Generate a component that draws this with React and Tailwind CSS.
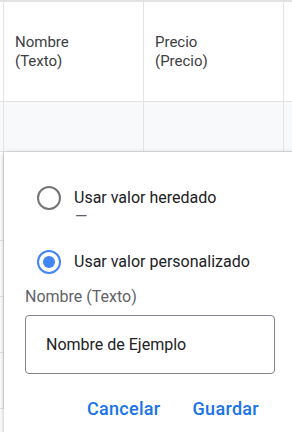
import React from 'react';

function Radio({ checked }) {
    return checked ? (
        <div className="w-6 h-6 rounded-full border-[2.5px] border-[#4285f4] flex items-center justify-center shrink-0">
            <div className="w-3 h-3 rounded-full bg-[#4285f4]"></div>
        </div>
    ) : (
        <div className="w-6 h-6 rounded-full border-[2.5px] border-[#757575] shrink-0"></div>
    );
}

function BodyRow({ height, shaded }) {
    return (
        <div className={`flex border-b border-[#e3e3e3] ${height} ${shaded ? 'bg-[#f8f9fa]' : 'bg-white'}`}>
            <div className="w-[4px] border-r border-[#e3e3e3]"></div>
            <div className="w-[140px] border-r border-[#e3e3e3]"></div>
            <div className="w-[140px] border-r border-[#e3e3e3]"></div>
            <div className="flex-1"></div>
        </div>
    );
}

export default function App() {
    return (
        <div className="relative w-[292px] h-[432px] overflow-hidden bg-white font-['Roboto',sans-serif]">
            {/* table behind */}
            <div className="border-t-2 border-[#e3e3e3]">
                <div className="flex h-[100px] border-b border-[#e3e3e3]">
                    <div className="w-[4px] border-r border-[#e3e3e3]"></div>
                    <div className="w-[140px] border-r border-[#e3e3e3] pl-[11px] flex items-center text-[15px] leading-[19px] text-[#3c4043]">
                        <div>Nombre<br />(Texto)</div>
                    </div>
                    <div className="w-[140px] border-r border-[#e3e3e3] pl-[11px] flex items-center text-[15px] leading-[19px] text-[#3c4043]">
                        <div>Precio<br />(Precio)</div>
                    </div>
                    <div className="flex-1"></div>
                </div>
                <BodyRow height="h-[50px]" shaded />
                <BodyRow height="h-[89px]" />
                <BodyRow height="h-[56px]" />
                <BodyRow height="h-[56px]" />
                <BodyRow height="h-[56px]" />
            </div>

            {/* edit popup */}
            <div className="absolute left-[4px] top-[152px] w-[300px] h-[300px] bg-white shadow-[0_1px_4px_rgba(0,0,0,0.2),0_2px_8px_rgba(0,0,0,0.1)] pl-[21px] pr-[29px] pt-[34px]">
                <div className="flex items-start gap-[13px] pl-[12px]">
                    <Radio />
                    <div>
                        <div className="text-[16px] leading-[24px] text-[#202124]">Usar valor heredado</div>
                        <div className="text-[16px] leading-[14px] text-[#5f6368] pl-[1px]">—</div>
                    </div>
                </div>
                <div className="flex items-center gap-[13px] pl-[12px] mt-[26px]">
                    <Radio checked />
                    <div className="text-[16px] leading-[24px] text-[#202124]">Usar valor personalizado</div>
                </div>
                <div className="mt-[11px] text-[16px] leading-[24px] text-[#5f6368]">Nombre (Texto)</div>
                <div className="mt-[6px] h-[59px] border border-[#80868b] rounded-[4px] flex items-center pl-[20px] text-[16px] text-[#202124]">
                    Nombre de Ejemplo
                </div>
                <div className="flex justify-end mt-[16px] pr-[1px]">
                    <button className="h-9 pl-[15px] pr-[17px] text-[18px] font-medium text-[#1a73e8] tracking-[0.3px]">Cancelar</button>
                    <button className="h-9 px-[15px] text-[18px] font-medium text-[#1a73e8] tracking-[0.3px]">Guardar</button>
                </div>
            </div>
        </div>
    );
}
